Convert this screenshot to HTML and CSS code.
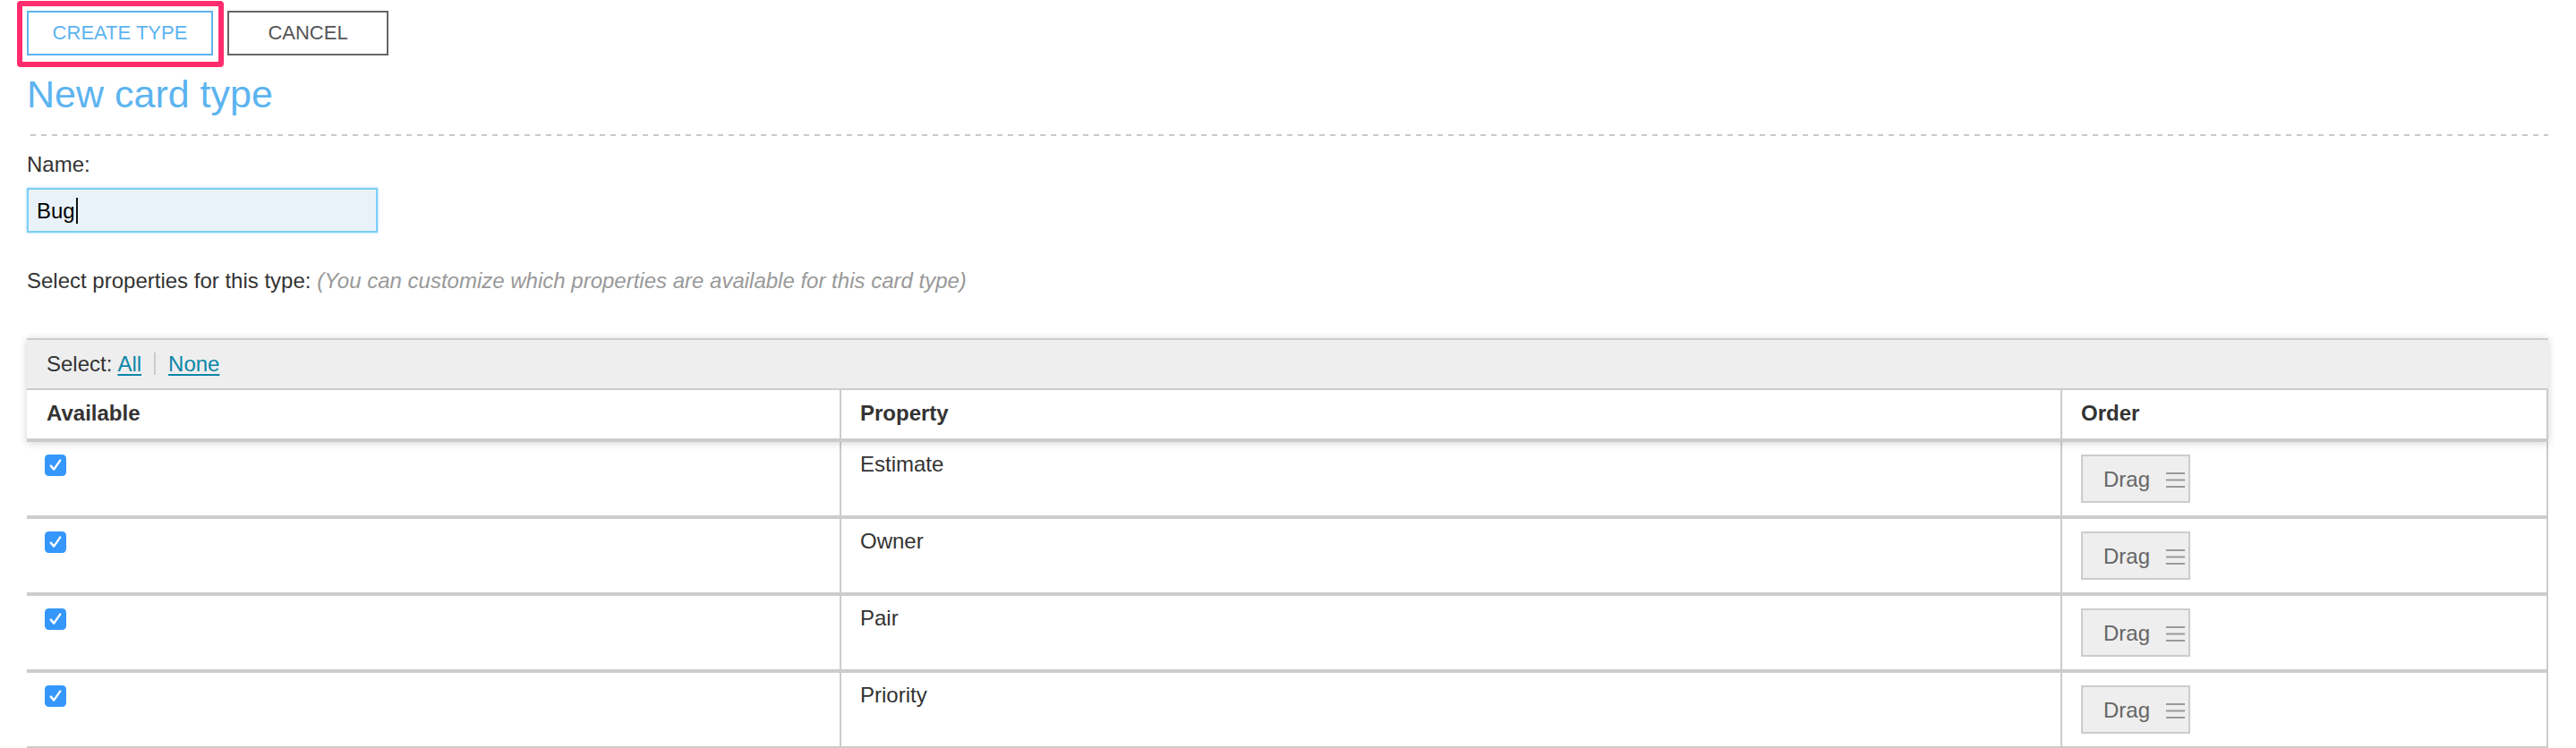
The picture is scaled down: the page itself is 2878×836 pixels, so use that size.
FILE: index.html
```html
<!DOCTYPE html>
<html lang="en">
<head>
<meta charset="utf-8">
<title>New card type</title>
<link rel="stylesheet" href="styles.css">
</head>
<body>
<div class="page">
  <div class="actions">
    <span class="focus-ring"><button class="btn btn-primary" type="button">CREATE TYPE</button></span>
    <button class="btn btn-cancel" type="button">CANCEL</button>
  </div>

  <h1 class="title">New card type</h1>
  <div class="divider"></div>

  <label class="field-label">Name:</label>
  <div class="name-input"><span class="value">Bug</span><span class="caret"></span></div>

  <p class="props-label">Select properties for this type: <em class="hint">(You can customize which properties are available for this card type)</em></p>

  <div class="prop-table">
    <div class="table-head">
      <div class="select-bar">
        <span class="select-text">Select:</span>
        <a class="link" href="#">All</a>
        <span class="sep"></span>
        <a class="link" href="#">None</a>
      </div>
      <div class="row head-row">
        <div class="cell">Available</div>
        <div class="cell col-line">Property</div>
        <div class="cell col-line">Order</div>
      </div>
    </div>

    <div class="row data-row">
      <div class="cell check-cell"><span class="checkbox"><svg width="24" height="24" viewBox="0 0 24 24"><rect x="0" y="0" width="24" height="24" rx="4.5" fill="#3597fb"/><path d="M6.8 12.6 L10.2 16.6 L17.2 6.6" fill="none" stroke="#fff" stroke-width="2.4" stroke-linecap="round" stroke-linejoin="round"/></svg></span></div>
      <div class="cell col-line text-cell">Estimate</div>
      <div class="cell col-line drag-cell"><span class="drag-btn">Drag<svg class="grip" width="21" height="17" viewBox="0 0 21 17"><rect x="0" y="0" width="21" height="2" fill="#999"/><rect x="0" y="7.5" width="21" height="2" fill="#999"/><rect x="0" y="15" width="21" height="2" fill="#999"/></svg></span></div>
    </div>

    <div class="row data-row">
      <div class="cell check-cell"><span class="checkbox"><svg width="24" height="24" viewBox="0 0 24 24"><rect x="0" y="0" width="24" height="24" rx="4.5" fill="#3597fb"/><path d="M6.8 12.6 L10.2 16.6 L17.2 6.6" fill="none" stroke="#fff" stroke-width="2.4" stroke-linecap="round" stroke-linejoin="round"/></svg></span></div>
      <div class="cell col-line text-cell">Owner</div>
      <div class="cell col-line drag-cell"><span class="drag-btn">Drag<svg class="grip" width="21" height="17" viewBox="0 0 21 17"><rect x="0" y="0" width="21" height="2" fill="#999"/><rect x="0" y="7.5" width="21" height="2" fill="#999"/><rect x="0" y="15" width="21" height="2" fill="#999"/></svg></span></div>
    </div>

    <div class="row data-row">
      <div class="cell check-cell"><span class="checkbox"><svg width="24" height="24" viewBox="0 0 24 24"><rect x="0" y="0" width="24" height="24" rx="4.5" fill="#3597fb"/><path d="M6.8 12.6 L10.2 16.6 L17.2 6.6" fill="none" stroke="#fff" stroke-width="2.4" stroke-linecap="round" stroke-linejoin="round"/></svg></span></div>
      <div class="cell col-line text-cell">Pair</div>
      <div class="cell col-line drag-cell"><span class="drag-btn">Drag<svg class="grip" width="21" height="17" viewBox="0 0 21 17"><rect x="0" y="0" width="21" height="2" fill="#999"/><rect x="0" y="7.5" width="21" height="2" fill="#999"/><rect x="0" y="15" width="21" height="2" fill="#999"/></svg></span></div>
    </div>

    <div class="row data-row">
      <div class="cell check-cell"><span class="checkbox"><svg width="24" height="24" viewBox="0 0 24 24"><rect x="0" y="0" width="24" height="24" rx="4.5" fill="#3597fb"/><path d="M6.8 12.6 L10.2 16.6 L17.2 6.6" fill="none" stroke="#fff" stroke-width="2.4" stroke-linecap="round" stroke-linejoin="round"/></svg></span></div>
      <div class="cell col-line text-cell">Priority</div>
      <div class="cell col-line drag-cell"><span class="drag-btn">Drag<svg class="grip" width="21" height="17" viewBox="0 0 21 17"><rect x="0" y="0" width="21" height="2" fill="#999"/><rect x="0" y="7.5" width="21" height="2" fill="#999"/><rect x="0" y="15" width="21" height="2" fill="#999"/></svg></span></div>
    </div>
  </div>
</div>
</body>
</html>
```

FILE: styles.css
```css
html, body {
  margin: 0;
  padding: 0;
  background: #fff;
}

body {
  font-family: "Liberation Sans", Arial, Helvetica, sans-serif;
  font-size: 24px;
  line-height: 29px;
  color: #333;
  overflow: hidden;
}

.page {
  padding: 1px 31px 0 30px;
}

/* top action buttons */
.actions {
  display: flex;
  align-items: flex-start;
  margin-left: -11px;
}

.focus-ring {
  display: inline-flex;
  border: 6px solid #ff2d6e;
  border-radius: 4px;
  padding: 5px 6px 7px 5px;
}

.btn {
  box-sizing: border-box;
  height: 50px;
  background: #fff;
  font-family: "Liberation Sans", Arial, Helvetica, sans-serif;
  font-size: 22px;
  line-height: 46px;
  margin: 0;
  cursor: pointer;
}

.btn-primary {
  width: 208px;
  padding: 0;
  border: 2px solid #5cb4f0;
  color: #5cb4f0;
}

.btn-cancel {
  width: 180px;
  padding: 0;
  margin-top: 11px;
  margin-left: 4px;
  border: 2px solid #666;
  color: #555;
}

/* heading */
.title {
  margin: 4px 0 0;
  font-size: 43px;
  line-height: 52px;
  font-weight: normal;
  color: #5cb4f0;
}

.divider {
  margin-top: 19px;
  height: 2px;
  background-image: linear-gradient(to right, #c9c9c9 50%, transparent 50%);
  background-size: 12px 2px;
  background-position: 4px 0;
  background-repeat: repeat-x;
}

/* name field */
.field-label {
  display: block;
  margin-top: 17px;
}

.name-input {
  box-sizing: border-box;
  margin-top: 12px;
  width: 392px;
  height: 50px;
  border: 2px solid #7ccff4;
  box-shadow: 0 0 3px rgba(110, 200, 245, 0.7);
  background: #eaf2f9;
  padding-left: 9px;
  display: flex;
  align-items: center;
  color: #000;
}

.caret {
  display: inline-block;
  width: 2px;
  height: 29px;
  margin-left: 1px;
  background: #111;
}

.props-label {
  margin: 39px 0 0;
}

.hint {
  color: #999;
}

/* property table */
.prop-table {
  margin-top: 50px;
}

.table-head {
  box-shadow: 0 1px 9px rgba(0, 0, 0, 0.18);
  position: relative;
}

.select-bar {
  box-sizing: border-box;
  height: 58px;
  border-top: 2px solid #ccc;
  border-bottom: 2px solid #ccc;
  background: #eee;
  padding-left: 22px;
  padding-bottom: 2px;
  display: flex;
  align-items: center;
}

.select-text {
  margin-right: 6px;
}

.link {
  color: #0b86a9;
  text-decoration: underline;
  text-decoration-thickness: 2px;
  text-underline-offset: 3px;
}

.sep {
  display: inline-block;
  width: 2px;
  height: 25px;
  background: #ccc;
  margin: 0 14px;
}

.row {
  display: grid;
  grid-template-columns: 908px 1364px 1fr;
  box-sizing: border-box;
  border-right: 2px solid #ccc;
  border-bottom: 4px solid #ccc;
  background: #fff;
}

.head-row {
  height: 58px;
  font-weight: bold;
}

.head-row .cell {
  display: flex;
  align-items: center;
  padding-bottom: 3px;
}

.data-row {
  height: 86px;
}

.cell {
  padding: 0 21px 0 22px;
}

.col-line {
  border-left: 2px solid #ccc;
  padding-left: 21px;
}

.check-cell {
  padding-top: 14px;
  padding-left: 20px;
}

.checkbox {
  display: block;
  width: 24px;
  height: 24px;
}

.checkbox svg {
  display: block;
}

.text-cell {
  padding-top: 10px;
}

.drag-cell {
  padding-top: 14px;
}

.drag-btn {
  box-sizing: border-box;
  display: flex;
  align-items: center;
  width: 122px;
  height: 54px;
  border: 2px solid #ccc;
  background: #eee;
  padding-left: 23px;
  color: #666;
}

.grip {
  display: block;
  margin-left: 18px;
  margin-top: 2px;
}
```
